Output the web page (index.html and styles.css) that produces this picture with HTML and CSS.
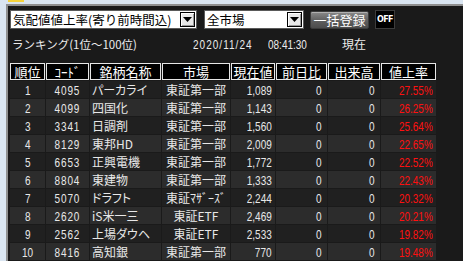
FILE: index.html
```html
<!DOCTYPE html>
<html lang="ja">
<head>
<meta charset="utf-8">
<link rel="stylesheet" href="styles.css">
</head>
<body>
<div class="taskmark"></div>
<div class="window">
  <div class="toolbar">
    <div class="combo combo-wide">
      <span class="combo-text">気配値値上率(寄り前時間込)</span>
      <span class="combo-btn"><svg width="9" height="5" viewBox="0 0 9 5"><path d="M0 0H9L4.5 5Z" fill="#000"/></svg></span>
    </div>
    <div class="combo combo-mid">
      <span class="combo-text">全市場</span>
      <span class="combo-btn"><svg width="9" height="5" viewBox="0 0 9 5"><path d="M0 0H9L4.5 5Z" fill="#000"/></svg></span>
    </div>
    <button class="btn">一括登録</button>
    <div class="off">OFF</div>
  </div>
  <div class="status">
    <span class="rank-label">ランキング(1位～100位)</span>
    <span><span class="n nl date">2020/11/24</span></span>
    <span><span class="n nl">08:41:30</span></span>
    <span class="now">現在</span>
  </div>
  <div class="grid">
    <div class="row head">
      <div class="hc">順位</div><div class="hc">ｺｰﾄﾞ</div><div class="hc">銘柄名称</div><div class="hc">市場</div><div class="hc">現在値</div><div class="hc">前日比</div><div class="hc">出来高</div><div class="hc">値上率</div>
    </div>
    <div class="row odd"><div class="c ctr"><span class="n nc">1</span></div><div class="c ctr"><span class="n nc code">4095</span></div><div class="c name">パーカライ</div><div class="c ctr">東証第一部</div><div class="c r3"><span class="n nr">1,089</span></div><div class="c r5"><span class="n nr">0</span></div><div class="c r5"><span class="n nr">0</span></div><div class="c r3 up"><span class="n nr">27.55%</span></div></div>
    <div class="row even"><div class="c ctr"><span class="n nc">2</span></div><div class="c ctr"><span class="n nc code">4099</span></div><div class="c name">四国化</div><div class="c ctr">東証第一部</div><div class="c r3"><span class="n nr">1,143</span></div><div class="c r5"><span class="n nr">0</span></div><div class="c r5"><span class="n nr">0</span></div><div class="c r3 up"><span class="n nr">26.25%</span></div></div>
    <div class="row odd"><div class="c ctr"><span class="n nc">3</span></div><div class="c ctr"><span class="n nc code">3341</span></div><div class="c name">日調剤</div><div class="c ctr">東証第一部</div><div class="c r3"><span class="n nr">1,560</span></div><div class="c r5"><span class="n nr">0</span></div><div class="c r5"><span class="n nr">0</span></div><div class="c r3 up"><span class="n nr">25.64%</span></div></div>
    <div class="row even"><div class="c ctr"><span class="n nc">4</span></div><div class="c ctr"><span class="n nc code">8129</span></div><div class="c name">東邦HD</div><div class="c ctr">東証第一部</div><div class="c r3"><span class="n nr">2,009</span></div><div class="c r5"><span class="n nr">0</span></div><div class="c r5"><span class="n nr">0</span></div><div class="c r3 up"><span class="n nr">22.65%</span></div></div>
    <div class="row odd"><div class="c ctr"><span class="n nc">5</span></div><div class="c ctr"><span class="n nc code">6653</span></div><div class="c name">正興電機</div><div class="c ctr">東証第一部</div><div class="c r3"><span class="n nr">1,772</span></div><div class="c r5"><span class="n nr">0</span></div><div class="c r5"><span class="n nr">0</span></div><div class="c r3 up"><span class="n nr">22.52%</span></div></div>
    <div class="row even"><div class="c ctr"><span class="n nc">6</span></div><div class="c ctr"><span class="n nc code">8804</span></div><div class="c name">東建物</div><div class="c ctr">東証第一部</div><div class="c r3"><span class="n nr">1,333</span></div><div class="c r5"><span class="n nr">0</span></div><div class="c r5"><span class="n nr">0</span></div><div class="c r3 up"><span class="n nr">22.43%</span></div></div>
    <div class="row odd"><div class="c ctr"><span class="n nc">7</span></div><div class="c ctr"><span class="n nc code">5070</span></div><div class="c name">ドラフト</div><div class="c ctr">東証ﾏｻﾞｰｽﾞ</div><div class="c r3"><span class="n nr">2,244</span></div><div class="c r5"><span class="n nr">0</span></div><div class="c r5"><span class="n nr">0</span></div><div class="c r3 up"><span class="n nr">20.32%</span></div></div>
    <div class="row even"><div class="c ctr"><span class="n nc">8</span></div><div class="c ctr"><span class="n nc code">2620</span></div><div class="c name">iS米一三</div><div class="c ctr">東証ETF</div><div class="c r3"><span class="n nr">2,469</span></div><div class="c r5"><span class="n nr">0</span></div><div class="c r5"><span class="n nr">0</span></div><div class="c r3 up"><span class="n nr">20.21%</span></div></div>
    <div class="row odd"><div class="c ctr"><span class="n nc">9</span></div><div class="c ctr"><span class="n nc code">2562</span></div><div class="c name">上場ダウヘ</div><div class="c ctr">東証ETF</div><div class="c r3"><span class="n nr">2,533</span></div><div class="c r5"><span class="n nr">0</span></div><div class="c r5"><span class="n nr">0</span></div><div class="c r3 up"><span class="n nr">19.82%</span></div></div>
    <div class="row even"><div class="c ctr"><span class="n nc">10</span></div><div class="c ctr"><span class="n nc code">8416</span></div><div class="c name">高知銀</div><div class="c ctr">東証第一部</div><div class="c r3"><span class="n nr">770</span></div><div class="c r5"><span class="n nr">0</span></div><div class="c r5"><span class="n nr">0</span></div><div class="c r3 up"><span class="n nr">19.48%</span></div></div>
  </div>
</div>
</body>
</html>
```
FILE: styles.css
```css
html, body {
  margin: 0;
  padding: 0;
  background: #dae5f1;
  overflow: hidden;
  height: 261px;
}
body {
  font-family: "Noto Sans CJK JP", sans-serif;
  position: relative;
}
.taskmark {
  position: absolute;
  left: 8px;
  top: 0;
  width: 16px;
  height: 2px;
  background: #f4d23c;
}
.window {
  margin: 4px 0 0 6px;
  border-top: 2px solid #8f8f8f;
  border-left: 2px solid #8f8f8f;
  background: #1a1a1a;
  height: 300px;
  padding: 4px 0 0 2px;
  box-sizing: border-box;
}
.toolbar {
  display: flex;
  align-items: flex-start;
  height: 19px;
}
.combo {
  display: flex;
  align-items: center;
  justify-content: space-between;
  background: #fff;
  border: 1px solid #5a5a5a;
  box-sizing: border-box;
  height: 19px;
  padding: 0 1px 0 2px;
  font-size: 12.5px;
  line-height: 17px;
  color: #000;
}
.combo-wide { width: 187px; }
.combo-mid { width: 100px; margin-left: 7px; }
.combo-text { white-space: nowrap; }
.combo-btn {
  width: 15px;
  height: 15px;
  box-sizing: border-box;
  border: 1px solid #000;
  background: #e8e8e8;
  box-shadow: inset 1px 1px 0 #fff, inset -1px -1px 0 #9a9a9a;
  display: flex;
  align-items: center;
  justify-content: center;
  flex: none;
}
.btn {
  margin: 1px 0 0 6px;
  width: 59px;
  height: 18px;
  padding: 0;
  border: 1px solid #3a3a3a;
  border-radius: 2px;
  background: linear-gradient(#8a8a8a, #5e5e5e 55%, #4c4c4c);
  box-shadow: inset 0 1px 0 #b0b0b0;
  color: #fff;
  font-family: "Noto Sans CJK JP", sans-serif;
  font-size: 13px;
  line-height: 16px;
}
.off {
  margin-left: 6px;
  width: 20px;
  height: 19px;
  box-sizing: border-box;
  background: #000;
  border: 1px solid #3c3c3c;
  color: #fff;
  font-family: "DejaVu Sans", sans-serif;
  font-weight: bold;
  font-size: 8px;
  line-height: 17px;
  padding-left: 1px;
  letter-spacing: -0.6px;
  white-space: nowrap;
}
.status {
  display: grid;
  grid-template-columns: 181px 75px 74px auto;
  padding: 7px 0 0 2px;
  height: 33px;
  box-sizing: border-box;
  color: #ececec;
  font-size: 12px;
  line-height: 16px;
}
.rank-label { font-size: 11.5px; white-space: nowrap; }
.n {
  display: inline-block;
  font-family: "Liberation Sans", sans-serif;
  font-size: 13.5px;
  transform: scaleX(0.74);
  white-space: nowrap;
}
.nl { transform-origin: left center; }
.nc { transform-origin: center; }
.nr { transform-origin: right center; }
.date { letter-spacing: 1.4px; }
.grid {
  margin-top: 1px;
}
.row {
  display: grid;
  grid-template-columns: 35px 43px 71px 68px 44px 51px 52px 55px;
  column-gap: 1px;
  width: 426px;
}
.head { height: 17px; }
.hc {
  background: #000;
  border: 1px solid #e6e6e6;
  color: #fff;
  font-size: 13px;
  line-height: 15px;
  text-align: center;
  white-space: nowrap;
}
.odd, .even {
  height: 17px;
  margin-top: 1px;
}
.c {
  color: #e8e8e8;
  font-size: 12px;
  line-height: 17px;
  white-space: nowrap;
  overflow: hidden;
}
.odd .c { background: #202020; }
.even .c { background: #2c2c2c; }
.ctr { text-align: center; }
.code { letter-spacing: 1.2px; }
.name { padding-left: 2px; font-feature-settings: "palt"; }
.r3 { text-align: right; padding-right: 3px; }
.r5 { text-align: right; padding-right: 5px; }
.up { color: #ff1010; }
```
